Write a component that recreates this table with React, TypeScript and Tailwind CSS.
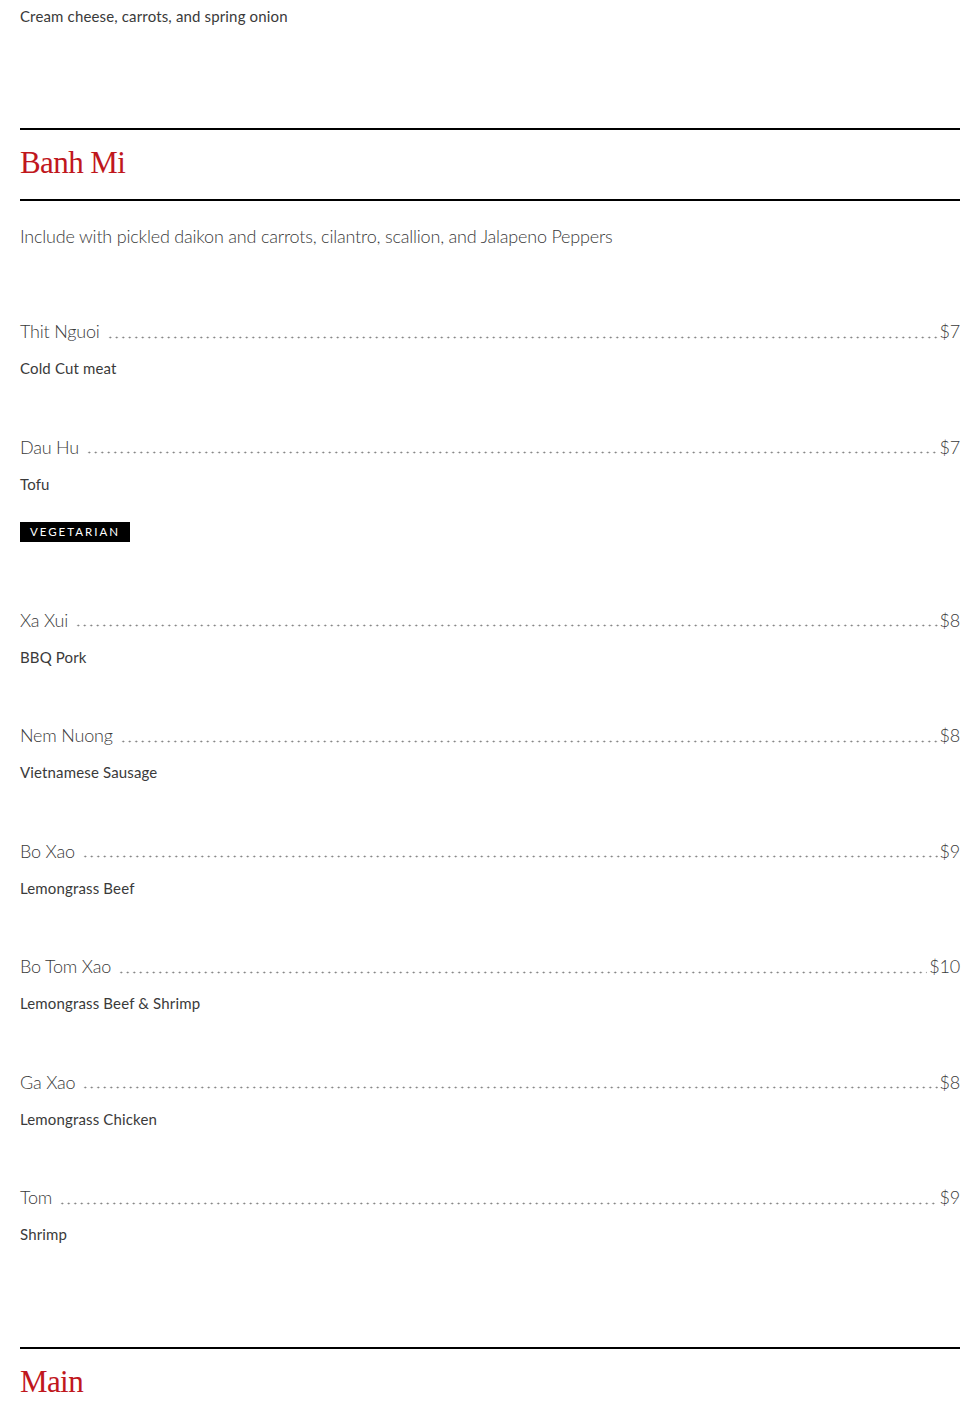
import React from 'react';

interface MenuItem {
    name: string;
    price: string;
    description: string;
    tags?: string[];
}

const banhMi: MenuItem[] = [
    { name: 'Thit Nguoi', price: '$7', description: 'Cold Cut meat' },
    { name: 'Dau Hu', price: '$7', description: 'Tofu', tags: ['VEGETARIAN'] },
    { name: 'Xa Xui', price: '$8', description: 'BBQ Pork' },
    { name: 'Nem Nuong', price: '$8', description: 'Vietnamese Sausage' },
    { name: 'Bo Xao', price: '$9', description: 'Lemongrass Beef' },
    { name: 'Bo Tom Xao', price: '$10', description: 'Lemongrass Beef & Shrimp' },
    { name: 'Ga Xao', price: '$8', description: 'Lemongrass Chicken' },
    { name: 'Tom', price: '$9', description: 'Shrimp' },
];

const nameFont = "font-['Lato','Noto_Sans',sans-serif]";
const descFont = "font-['Lato','Noto_Sans',sans-serif]";
const headFont = "font-['Liberation_Serif','DejaVu_Serif',serif]";

const SectionTitle: React.FC<{ title: string }> = ({ title }) => (
    <>
        <div className="h-[2px] bg-black" />
        <h2 className={`${headFont} pt-[14px] pb-[17px] text-[31px] leading-[38px] tracking-[-0.6px] text-[#c0171d]`}>{title}</h2>
    </>
);

const Item: React.FC<{ item: MenuItem; first?: boolean }> = ({ item, first }) => (
    <div className={first ? '' : 'pt-[54.5px]'}>
        <div className={`${nameFont} flex items-end text-[18px] leading-[26px] font-light tracking-[-0.2px] text-[#3a3a3a]`}>
            <span>{item.name}</span>
            <span className="ml-[7px] mr-[2px] mb-[5.5px] h-[3px] flex-1 bg-[radial-gradient(circle,#777_0.75px,transparent_1.15px)] bg-[length:6.5px_3px] bg-repeat-x" />
            <span>{item.price}</span>
        </div>
        <p className={`${descFont} mt-[13px] text-[15px] leading-[22px] tracking-[0.15px] text-[#3a3a3a]`}>{item.description}</p>
        {item.tags && (
            <div className="mt-[27px] mb-[10.5px] flex gap-2">
                {item.tags.map(t => (
                    <span key={t} className={`${descFont} h-[20px] w-[110px] bg-black text-center text-[11.5px] leading-[20px] tracking-[2px] text-white`}>{t}</span>
                ))}
            </div>
        )}
    </div>
);

export default function App() {
    return (
        <div className="min-h-screen bg-white">
            <div className="ml-[20px] w-[940px]">
                <div className="h-[128px]">
                    <p className={`${descFont} pt-[5px] text-[15px] leading-[22px] tracking-[0.15px] text-[#3a3a3a]`}>Cream cheese, carrots, and spring onion</p>
                </div>

                <SectionTitle title="Banh Mi" />
                <div className="h-[2px] bg-black" />
                <p className={`${nameFont} pt-[22px] text-[18px] leading-[26px] font-light tracking-[-0.2px] text-[#3a3a3a]`}>
                    Include with pickled daikon and carrots, cilantro, scallion, and Jalapeno Peppers
                </p>

                <div className="pt-[69px]">
                    {banhMi.map((item, i) => (
                        <Item key={item.name} item={item} first={i === 0} />
                    ))}
                </div>

                <div className="pt-[102px]">
                    <SectionTitle title="Main" />
                </div>
            </div>
        </div>
    );
}
